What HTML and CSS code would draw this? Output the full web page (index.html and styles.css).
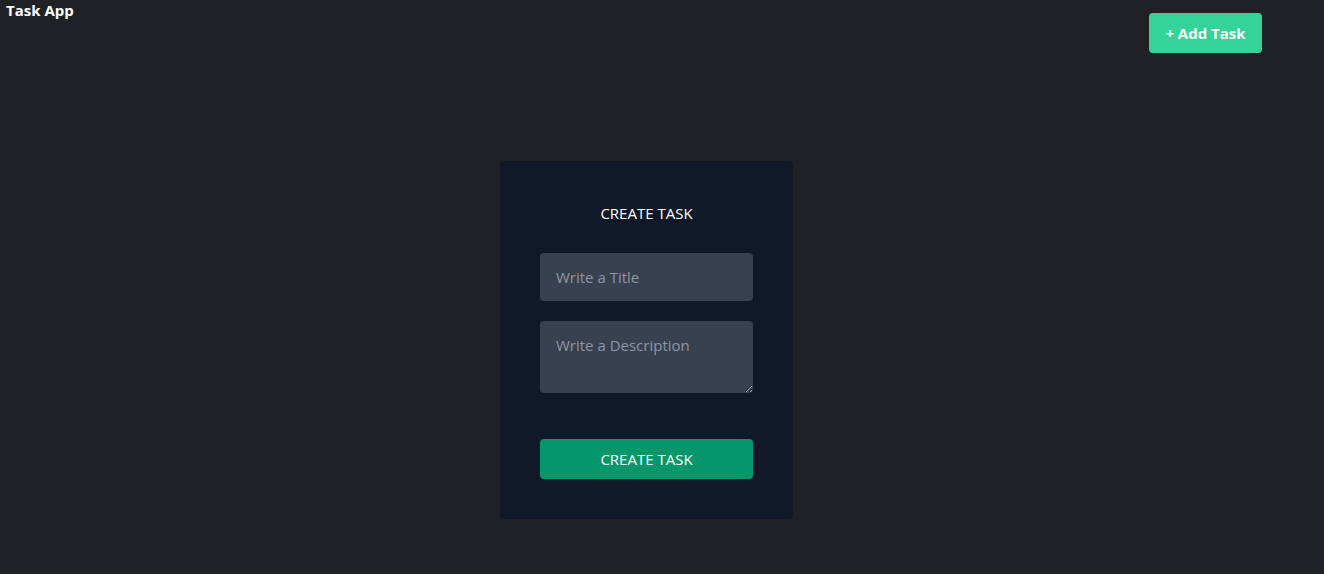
FILE: index.html
```html
<!DOCTYPE html>
<html>
<head>
<meta charset="utf-8">
<link rel="stylesheet" href="styles.css">
</head>
<body>
<header class="topbar">
  <h1 class="brand">Task App</h1>
  <button class="add-btn">+ Add Task</button>
</header>
<main class="main">
  <form class="card">
    <h2 class="card-title">CREATE TASK</h2>
    <input class="field" type="text" placeholder="Write a Title">
    <textarea class="field area" placeholder="Write a Description"></textarea>
    <button class="submit" type="button">CREATE TASK</button>
  </form>
</main>
</body>
</html>
```
FILE: styles.css
```css
* { box-sizing: border-box; }
html, body { margin: 0; padding: 0; }
body {
  background: #202124;
  color: #fff;
  font-family: "Open Sans", "Noto Sans", sans-serif;
  font-size: 16px;
  height: 574px;
  overflow: hidden;
}
.topbar {
  display: flex;
  justify-content: space-between;
  align-items: flex-start;
  padding: 0 62px 0 6px;
}
.brand {
  margin: 0;
  font-size: 15px;
  font-weight: 700;
  line-height: 20px;
}
.add-btn {
  margin-top: 13px;
  height: 40px;
  width: 113px;
  background: #34d399;
  color: #fff;
  border: 0;
  border-radius: 4px;
  font-family: inherit;
  font-size: 15px;
  font-weight: 700;
  padding: 0;
}
.main {
  display: flex;
  justify-content: center;
  padding-right: 31px;
  margin-top: 108px;
}
.card {
  width: 293px;
  background: #111827;
  border-radius: 4px;
  padding: 40px;
  display: flex;
  flex-direction: column;
}
.card-title {
  margin: 0 0 28px;
  font-size: 15px;
  font-weight: 400;
  line-height: 24px;
  text-align: center;
}
.field {
  width: 213px;
  height: 48px;
  background: #374151;
  border: 0;
  border-radius: 4px;
  padding: 12px 16px;
  color: #fff;
  font-family: inherit;
  font-size: 15px;
  line-height: 24px;
  margin-bottom: 20px;
  outline: none;
}
.field::placeholder { color: #8e96a3; }
.area {
  height: 72px;
  margin-bottom: 46px;
  resize: vertical;
  padding-top: 12px;
}
.submit {
  height: 40px;
  width: 213px;
  background: #059669;
  color: #fff;
  border: 0;
  border-radius: 4px;
  font-family: inherit;
  font-size: 15px;
}
```
